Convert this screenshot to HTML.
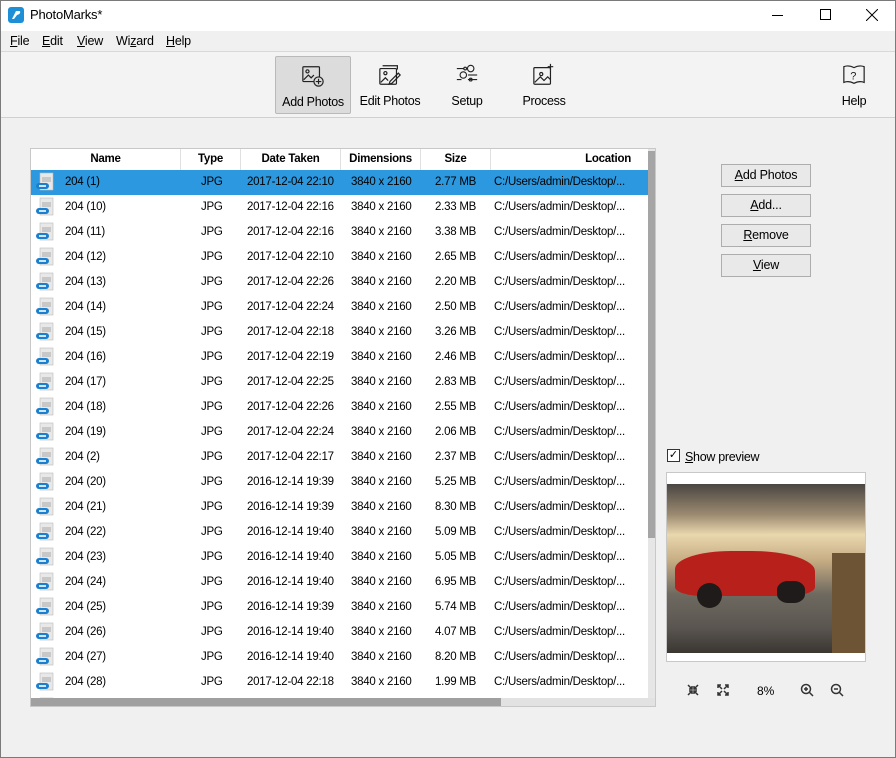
<!DOCTYPE html>
<html><head><meta charset="utf-8"><style>
*{box-sizing:border-box;margin:0;padding:0}
body{width:896px;height:758px;background:#f0f0f0;font-family:"Liberation Sans",sans-serif;font-size:12px;color:#000;position:relative;overflow:hidden}
.abs{position:absolute}
.frame{left:0;top:0;width:896px;height:758px;border:1px solid #7a7a7a;pointer-events:none;z-index:9}
.title{left:0;top:0;width:896px;height:31px;background:#fff}
.menu{left:0;top:31px;width:896px;height:21px;background:#f0f0f0;border-bottom:1px solid #d8d8d8}
.menu span{position:absolute;top:3px;font-size:12.5px;letter-spacing:-0.2px}
.tb{left:0;top:52px;width:896px;height:66px;background:#f3f3f3;border-bottom:1px solid #d0d0d0}
.tbtn{position:absolute;top:4px;width:76px;height:58px;text-align:center;font-size:12.5px;letter-spacing:-0.3px}
.tbtn svg{display:block;margin:7px auto 7px}
.tbl{left:30px;top:148px;width:626px;height:559px;background:#fff;border:1px solid #c8c8c8;overflow:hidden;font-size:11.5px;letter-spacing:-0.25px}
.hdr{position:absolute;left:0;top:0;height:22px;width:618px;border-bottom:1px solid #e0e0e0;font-weight:bold}
.hdr div,.row div{position:absolute;top:0;height:100%;line-height:21px;white-space:nowrap}
.hdr div{border-right:1px solid #e0e0e0;text-align:center}
.row{position:absolute;left:0;width:618px;height:25px}
.row div{line-height:24px}
.sel{background:#2c98df}
.ic{position:absolute;left:4px;top:2px;width:20px;height:20px}
.btn{position:absolute;left:721px;width:90px;height:23px;background:#e9e9e9;border:1px solid #adadad;text-align:center;line-height:21px;font-size:12.5px;letter-spacing:-0.2px}
</style></head><body>
<div class="abs frame"></div>
<div class="abs title">
<svg class="abs" style="left:8px;top:7px" width="16" height="16"><rect width="16" height="16" rx="3" fill="#1d8fd6"/><path d="M4 12 L8 4 L12 4 Q13 7 9 8 L6 12Z" fill="#fff"/></svg>
<span class="abs" style="left:30px;top:7px;font-size:13px;letter-spacing:-0.2px">PhotoMarks*</span>
<div class="abs" style="left:772px;top:15px;width:11px;height:1px;background:#000"></div>
<div class="abs" style="left:820px;top:9px;width:11px;height:11px;border:1px solid #000"></div>
<svg class="abs" style="left:866px;top:9px" width="12" height="12"><path d="M0 0L12 12M12 0L0 12" stroke="#000" stroke-width="1"/></svg>
</div>
<div class="abs menu">
<span style="left:10px"><u>F</u>ile</span><span style="left:42px"><u>E</u>dit</span><span style="left:77px"><u>V</u>iew</span><span style="left:116px">Wi<u>z</u>ard</span><span style="left:166px"><u>H</u>elp</span>
</div>
<div class="abs tb">
<div class="tbtn" style="left:275px;background:#dcdcdc;border:1px solid #b9b9b9;border-radius:2px"><svg width="24" height="24" viewBox="0 0 26 26" fill="none" stroke="#222" stroke-width="1.3"><rect x="2" y="3" width="18" height="16" rx="1"/><circle cx="7" cy="8" r="1.7"/><path d="M3 17l5-5 3 3 3-3"/><circle cx="19" cy="19" r="5" fill="#dcdcdc"/><path d="M19 16v6M16 19h6"/></svg>Add Photos</div>
<div class="tbtn" style="left:352px"><svg width="24" height="24" viewBox="0 0 26 26" fill="none" stroke="#222" stroke-width="1.3"><path d="M5 3h16v4"/><rect x="2" y="6" width="18" height="17" rx="1"/><circle cx="8" cy="11" r="1.7"/><path d="M3 21l5-5 3 3"/><path d="M13 20l9-9 2 2-9 9-3 1z"/></svg>Edit Photos</div>
<div class="tbtn" style="left:429px"><svg width="24" height="24" viewBox="0 0 26 26" fill="none" stroke="#222" stroke-width="1.2"><path d="M2 6h8M14 18h10M2 18h5"/><circle cx="11" cy="6" r="1.5"/><circle cx="17" cy="6" r="3.5"/><circle cx="9" cy="13" r="3.5"/><circle cx="17" cy="18" r="1.5"/><path d="M14 13h10"/></svg>Setup</div>
<div class="tbtn" style="left:506px"><svg width="24" height="24" viewBox="0 0 26 26" fill="none" stroke="#222" stroke-width="1.3"><rect x="2" y="5" width="18" height="18" rx="1"/><circle cx="10" cy="12" r="1.7"/><path d="M3 21l6-6 4 4 4-4 3 3"/><path d="M20 1v6M17 4h6"/></svg>Process</div>
<div class="tbtn" style="left:816px"><svg width="24" height="24" viewBox="0 0 26 26" fill="none" stroke="#222" stroke-width="1.3"><path d="M2 4q5-2 11 1q6-3 11-1v17q-5-2-11 1q-6-3-11-1z"/><text x="9" y="18" font-size="12" fill="#222" stroke="none" font-family="Liberation Sans">?</text></svg>Help</div>
</div>

<div class="abs tbl">
<div class="hdr"><div style="left:0;width:150px">Name</div><div style="left:150px;width:60px">Type</div><div style="left:210px;width:100px">Date Taken</div><div style="left:310px;width:80px">Dimensions</div><div style="left:390px;width:70px">Size</div><div style="left:460px;width:158px;text-align:right;padding-right:18px;border:none">Location</div></div>
<div id="rows"></div>
<div class="abs" style="left:617px;top:0;width:8px;height:549px;background:#e6e6e6"></div>
<div class="abs" style="left:617px;top:2px;width:8px;height:387px;background:#a5a5a5"></div>
<div class="abs" style="left:0;top:549px;width:625px;height:9px;background:#e2e2e2"></div>
<div class="abs" style="left:0;top:549px;width:470px;height:9px;background:#a0a0a0"></div>
</div>

<div class="btn" style="top:164px"><u>A</u>dd Photos</div>
<div class="btn" style="top:194px"><u>A</u>dd...</div>
<div class="btn" style="top:224px"><u>R</u>emove</div>
<div class="btn" style="top:254px"><u>V</u>iew</div>

<div class="abs" style="left:667px;top:449px;width:13px;height:13px;background:#fff;border:1px solid #333;font-size:11px;line-height:11px;text-align:center">✓</div>
<span class="abs" style="left:685px;top:450px;font-size:12.5px;letter-spacing:-0.3px"><u>S</u>how preview</span>
<div class="abs" style="left:666px;top:472px;width:200px;height:190px;background:#fff;border:1px solid #c8c8c8">
<div class="abs" style="left:0;top:11px;width:198px;height:169px;background:linear-gradient(#4a4642 0%,#9b8a70 18%,#e9d7ae 30%,#c7ad84 45%,#6f6a60 65%,#5a5550 85%,#3a3630 100%)"></div>
<div class="abs" style="left:8px;top:78px;width:140px;height:45px;border-radius:40% 45% 20% 20%;background:#b8211b"></div>
<div class="abs" style="left:30px;top:110px;width:25px;height:25px;border-radius:50%;background:#1e1b1a"></div>
<div class="abs" style="left:110px;top:108px;width:28px;height:22px;border-radius:40%;background:#1e1b1a"></div>
<div class="abs" style="left:165px;top:80px;width:33px;height:100px;background:#6c5434"></div>
</div>
<svg class="abs" style="left:687px;top:684px" width="12" height="12" fill="none" stroke="#333" stroke-width="1.5"><path d="M1 1l4 4M5 2v3H2M11 1L7 5M7 2v3h3M1 11l4-4M2 7h3v3M11 11L7 7M10 7H7v3"/></svg>
<svg class="abs" style="left:717px;top:684px" width="12" height="12" fill="none" stroke="#333" stroke-width="1.5"><path d="M1 1l4 4M1 4V1h3M11 1L7 5M8 1h3v3M1 11l4-4M1 8v3h3M11 11L7 7M11 8v3H8"/></svg>
<span class="abs" style="left:757px;top:684px">8%</span>
<svg class="abs" style="left:800px;top:683px" width="14" height="14" fill="none" stroke="#333" stroke-width="1.5"><circle cx="6" cy="6" r="4.5"/><path d="M9.5 9.5L13 13M4 6h4M6 4v4"/></svg>
<svg class="abs" style="left:830px;top:683px" width="14" height="14" fill="none" stroke="#333" stroke-width="1.5"><circle cx="6" cy="6" r="4.5"/><path d="M9.5 9.5L13 13M4 6h4"/></svg>

<script>
var d=[["1","2017-12-04 22:10","2.77"],["10","2017-12-04 22:16","2.33"],["11","2017-12-04 22:16","3.38"],["12","2017-12-04 22:10","2.65"],["13","2017-12-04 22:26","2.20"],["14","2017-12-04 22:24","2.50"],["15","2017-12-04 22:18","3.26"],["16","2017-12-04 22:19","2.46"],["17","2017-12-04 22:25","2.83"],["18","2017-12-04 22:26","2.55"],["19","2017-12-04 22:24","2.06"],["2","2017-12-04 22:17","2.37"],["20","2016-12-14 19:39","5.25"],["21","2016-12-14 19:39","8.30"],["22","2016-12-14 19:40","5.09"],["23","2016-12-14 19:40","5.05"],["24","2016-12-14 19:40","6.95"],["25","2016-12-14 19:39","5.74"],["26","2016-12-14 19:40","4.07"],["27","2016-12-14 19:40","8.20"],["28","2017-12-04 22:18","1.99"],["29","2017-12-04 22:18","2.10"]];
var h="";d.forEach(function(r,i){h+='<div class="row'+(i==0?' sel':'')+'" style="top:'+(21+i*25)+'px"><svg class="ic" viewBox="0 0 20 20"><rect x="5" y="1" width="13" height="17" fill="#e8e8e8" stroke="#bbb" stroke-width=".6"/><rect x="7" y="5" width="9" height="5" fill="#c8c8c8"/><rect x="1" y="11" width="13" height="6" rx="3" fill="#1a7fcf"/><rect x="4" y="13" width="7" height="2" fill="#cfe6fa"/></svg><div style="left:34px">204 ('+r[0]+')</div><div style="left:170px">JPG</div><div style="left:216px">'+r[1]+'</div><div style="left:320px">3840 x 2160</div><div style="left:404px">'+r[2]+' MB</div><div style="left:463px">C:/Users/admin/Desktop/...</div></div>'});
document.getElementById("rows").innerHTML=h;
</script>
</body></html>
